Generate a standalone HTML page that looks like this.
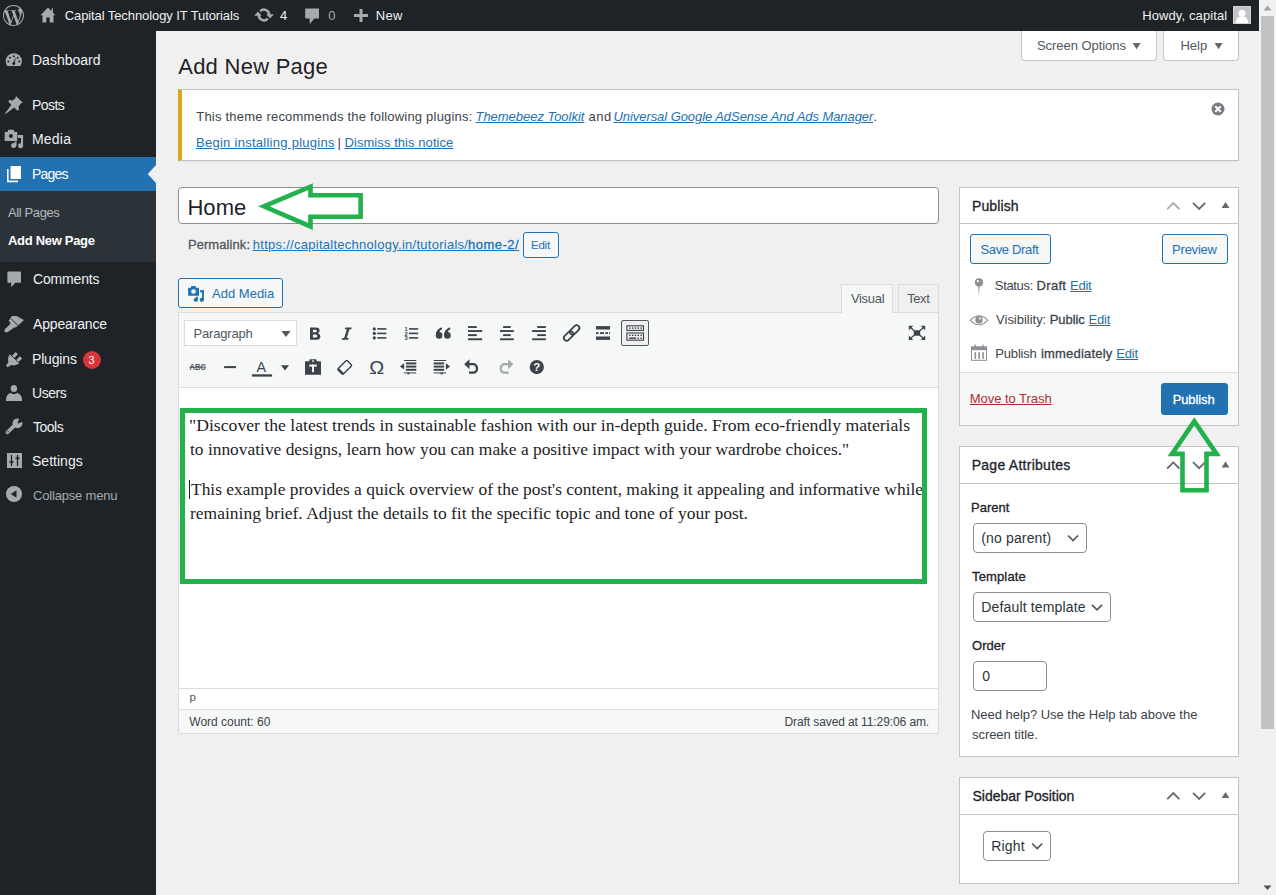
<!DOCTYPE html>
<html><head><meta charset="utf-8"><style>
html,body{margin:0;padding:0;}
body{width:1276px;height:895px;overflow:hidden;position:relative;background:#f0f0f1;font-family:"Liberation Sans",sans-serif;}
.t{position:absolute;white-space:nowrap;text-decoration-thickness:1px;text-underline-offset:1px;}
svg{overflow:visible}
</style></head><body>
<div style="position:absolute;left:0px;top:0px;width:1259px;height:31px;box-sizing:border-box;background:#1d2327"></div>
<div style="position:absolute;left:1259px;top:0px;width:17px;height:895px;box-sizing:border-box;background:#f1f1f1"></div>
<div style="position:absolute;left:1261px;top:16px;width:13px;height:713px;box-sizing:border-box;background:#c1c1c1"></div>
<svg style="position:absolute;left:1263px;top:5px;" width="9" height="6" viewBox="0 0 9 6"><path d="M0.5 5.5 L4.5 0.5 L8.5 5.5Z" fill="#a3a3a3"/></svg>
<svg style="position:absolute;left:1263px;top:885px;" width="9" height="6" viewBox="0 0 9 6"><path d="M0.5 0.5 L4.5 5 L8.5 0.5Z" fill="#505050"/></svg>
<div style="position:absolute;left:0px;top:31px;width:156px;height:864px;box-sizing:border-box;background:#1d2327"></div>
<div style="position:absolute;left:0px;top:157px;width:156px;height:34px;box-sizing:border-box;background:#2271b1"></div>
<div style="position:absolute;left:0px;top:191px;width:156px;height:71px;box-sizing:border-box;background:#2c3338"></div>
<svg style="position:absolute;left:147px;top:165px;" width="9" height="18" viewBox="0 0 9 18"><path d="M9 0 L0.8 9 L9 18Z" fill="#f0f0f1"/></svg>
<div style="position:absolute;left:82.5px;top:351px;width:18.0px;height:18px;box-sizing:border-box;background:#d63638;border-radius:9px"></div>
<div class="t" style="left:82.5px;top:351px;width:18px;text-align:center;font-family:'Liberation Sans';font-size:11px;line-height:18px;color:#fff">3</div>
<div style="position:absolute;left:1021px;top:31px;width:136px;height:30px;box-sizing:border-box;background:#fff;border:1px solid #c3c4c7;border-top:none;border-radius:0 0 4px 4px"></div>
<div style="position:absolute;left:1163px;top:31px;width:76px;height:30px;box-sizing:border-box;background:#fff;border:1px solid #c3c4c7;border-top:none;border-radius:0 0 4px 4px"></div>
<svg style="position:absolute;left:1132px;top:42px;" width="9" height="8" viewBox="0 0 9 8"><path d="M0.6 0.9 L8.6 0.9 L4.6 7.2Z" fill="#646970"/></svg>
<svg style="position:absolute;left:1213.6px;top:42px;" width="9" height="8" viewBox="0 0 9 8"><path d="M0.6 0.9 L8.6 0.9 L4.6 7.2Z" fill="#646970"/></svg>
<div style="position:absolute;left:178px;top:89px;width:1061px;height:72px;box-sizing:border-box;background:#fff;border:1px solid #c3c4c7;border-left:4px solid #dba617;box-shadow:0 1px 1px rgba(0,0,0,.04)"></div>
<svg style="position:absolute;left:1211px;top:102px;" width="14" height="14" viewBox="0 0 14 14"><circle cx="7" cy="7" r="6.5" fill="#787c82"/><path d="M4.3 4.3 L9.7 9.7 M9.7 4.3 L4.3 9.7" stroke="#fff" stroke-width="2"/></svg>
<div style="position:absolute;left:178px;top:187px;width:761px;height:37px;box-sizing:border-box;background:#fff;border:1px solid #8c8f94;border-radius:4px"></div>
<div style="position:absolute;left:523px;top:232px;width:36px;height:26px;box-sizing:border-box;background:#f6f7f7;border:1px solid #2271b1;border-radius:3px"></div>
<div style="position:absolute;left:178px;top:278px;width:105px;height:30px;box-sizing:border-box;background:#f6f7f7;border:1px solid #2271b1;border-radius:3px"></div>
<div style="position:absolute;left:898px;top:284px;width:41px;height:29px;box-sizing:border-box;background:#f0f0f1;border:1px solid #dcdcde"></div>
<div style="position:absolute;left:841px;top:284px;width:52px;height:29px;box-sizing:border-box;background:#f6f7f7;border:1px solid #dcdcde;border-bottom:none"></div>
<div style="position:absolute;left:178px;top:312px;width:761px;height:422px;box-sizing:border-box;background:#fff;border:1px solid #dcdcde"></div>
<div style="position:absolute;left:179px;top:313px;width:759px;height:75px;box-sizing:border-box;background:#f6f7f7;border-bottom:1px solid #dcdcde"></div>
<div style="position:absolute;left:842px;top:312px;width:50px;height:2px;box-sizing:border-box;background:#f6f7f7"></div>
<div style="position:absolute;left:179px;top:688px;width:759px;height:22px;box-sizing:border-box;background:#fff;border-top:1px solid #dcdcde"></div>
<div style="position:absolute;left:179px;top:709px;width:759px;height:24px;box-sizing:border-box;background:#f6f7f7;border-top:1px solid #dcdcde"></div>
<div style="position:absolute;left:184px;top:320px;width:113px;height:26px;box-sizing:border-box;background:#fff;border:1px solid #dcdcde"></div>
<svg style="position:absolute;left:281px;top:330px;" width="10" height="8" viewBox="0 0 10 8"><path d="M0.5 1 L9.5 1 L5 7Z" fill="#50575e"/></svg>
<div style="position:absolute;left:621px;top:320px;width:28px;height:26px;box-sizing:border-box;background:#f0f0f1;border:1px solid #50575e;border-radius:2px"></div>
<div style="position:absolute;left:959px;top:187px;width:280px;height:239px;box-sizing:border-box;background:#fff;border:1px solid #c3c4c7"></div>
<div style="position:absolute;left:960px;top:223px;width:278px;height:1px;box-sizing:border-box;background:#c3c4c7"></div>
<div style="position:absolute;left:970px;top:234px;width:81px;height:30px;box-sizing:border-box;background:#f6f7f7;border:1px solid #2271b1;border-radius:3px"></div>
<div style="position:absolute;left:1162px;top:234px;width:66px;height:30px;box-sizing:border-box;background:#f6f7f7;border:1px solid #2271b1;border-radius:3px"></div>
<div style="position:absolute;left:960px;top:372px;width:278px;height:53px;box-sizing:border-box;background:#f6f7f7;border-top:1px solid #dcdcde"></div>
<div style="position:absolute;left:1161px;top:383px;width:67px;height:32px;box-sizing:border-box;background:#2271b1;border:1px solid #2271b1;border-radius:3px"></div>
<div style="position:absolute;left:959px;top:446px;width:280px;height:311px;box-sizing:border-box;background:#fff;border:1px solid #c3c4c7"></div>
<div style="position:absolute;left:960px;top:483px;width:278px;height:1px;box-sizing:border-box;background:#c3c4c7"></div>
<div style="position:absolute;left:973px;top:523px;width:114px;height:30px;box-sizing:border-box;background:#fff;border:1px solid #8c8f94;border-radius:4px"></div>
<div style="position:absolute;left:973px;top:592px;width:138px;height:30px;box-sizing:border-box;background:#fff;border:1px solid #8c8f94;border-radius:4px"></div>
<div style="position:absolute;left:973px;top:661px;width:74px;height:30px;box-sizing:border-box;background:#fff;border:1px solid #8c8f94;border-radius:4px"></div>
<div style="position:absolute;left:959px;top:777px;width:280px;height:107px;box-sizing:border-box;background:#fff;border:1px solid #c3c4c7"></div>
<div style="position:absolute;left:960px;top:814px;width:278px;height:1px;box-sizing:border-box;background:#c3c4c7"></div>
<div style="position:absolute;left:983px;top:831px;width:68px;height:30px;box-sizing:border-box;background:#fff;border:1px solid #8c8f94;border-radius:4px"></div>
<svg style="position:absolute;left:2.5px;top:4.5px;" width="21" height="21" viewBox="0 0 24 24"><path fill="#a7aaad" d="M21.469 6.825c.84 1.537 1.318 3.3 1.318 5.175 0 3.979-2.156 7.456-5.363 9.325l3.295-9.527c.615-1.54.82-2.771.82-3.864 0-.405-.026-.78-.07-1.11m-7.981.105c.647-.03 1.232-.105 1.232-.105.582-.075.514-.93-.067-.899 0 0-1.755.135-2.88.135-1.064 0-2.85-.15-2.850-.15-.585-.03-.661.855-.075.885 0 0 .54.061 1.125.09l1.68 4.605-2.37 7.08L5.354 6.9c.649-.03 1.234-.1 1.234-.1.585-.075.516-.93-.065-.896 0 0-1.746.138-2.874.138-.2 0-.438-.008-.69-.015C4.911 3.15 8.235 1.215 12 1.215c2.809 0 5.365 1.072 7.286 2.833-.046-.003-.091-.009-.141-.009-1.06 0-1.812.923-1.812 1.914 0 .89.513 1.643 1.06 2.531.411.72.89 1.643.89 2.977 0 .915-.354 1.994-.821 3.479l-1.075 3.585-3.9-11.61.001.014zM12 22.784c-1.059 0-2.081-.153-3.048-.437l3.237-9.406 3.315 9.087c.024.053.05.101.078.149-1.12.393-2.325.609-3.582.609M1.211 12c0-1.564.336-3.05.935-4.39L7.29 21.709C3.694 19.960 1.212 16.271 1.211 12M12 0C5.385 0 0 5.385 0 12s5.385 12 12 12 12-5.385 12-12S18.615 0 12 0"/></svg>
<svg style="position:absolute;left:40px;top:7px;" width="16" height="16" viewBox="0 0 16 16"><path d="M8 0.5 L0.5 8.3 L2.5 8.3 L2.5 15.5 L6.3 15.5 L6.3 10.5 L9.7 10.5 L9.7 15.5 L13.5 15.5 L13.5 8.3 L15.5 8.3 L13 5.7 L13 1.5 L11.5 1.5 L11.5 4.2Z" fill="#a7aaad"/></svg>
<svg style="position:absolute;left:0px;top:0px;" width="1" height="1" viewBox="0 0 1 1"><g fill="none" stroke="#a7aaad" stroke-width="2.5"><path d="M260.2 11.3 A5.2 5.2 0 0 1 269.2 15.2"/><path d="M267.8 18.7 A5.2 5.2 0 0 1 258.8 14.8"/></g><path fill="#a7aaad" d="M266.2 14.2 L273.9 14.2 L270 18.6Z M261.8 15.8 L254.1 15.8 L258 11.4Z"/></svg>
<svg style="position:absolute;left:305px;top:8px;" width="14" height="16" viewBox="0 0 14 16"><path d="M0.6 0.4 H13.6 Q14 0.4 14 0.8 V10.1 Q14 10.5 13.6 10.5 H9.3 L4.8 16 L4.6 10.5 H0.6 Q0.2 10.5 0.2 10.1 V0.8 Q0.2 0.4 0.6 0.4Z" fill="#a7aaad"/></svg>
<svg style="position:absolute;left:354px;top:9px;" width="14" height="13" viewBox="0 0 14 13"><path d="M5.5 0 H8.5 V5 H14 V8 H8.5 V13 H5.5 V8 H0 V5 H5.5Z" fill="#a7aaad"/></svg>
<div style="position:absolute;left:1233px;top:6px;width:18px;height:18px;box-sizing:border-box;background:#c3c4c7;border:1px solid #d0d1d3"></div>
<svg style="position:absolute;left:1233px;top:6px;" width="18" height="18" viewBox="0 0 18 18"><circle cx="9" cy="7.2" r="3.5" fill="#fff"/><path d="M2.8 17 Q3.6 10.8 7.2 10.6 L10.8 10.6 Q14.4 10.8 15.2 17Z" fill="#fff"/></svg>
<svg style="position:absolute;left:0px;top:0px;" width="1" height="1" viewBox="0 0 1 1"><path fill="#a7aaad" d="M7.2 66 A8.1 8.1 0 1 1 20.4 66 Z"/><g fill="#1d2327"><circle cx="13.8" cy="56.2" r="1"/><circle cx="10" cy="57.8" r="1"/><circle cx="17.6" cy="57.8" r="1"/><circle cx="8.4" cy="61.6" r="1"/><circle cx="19.2" cy="61.6" r="1"/><path d="M12.9 63.2 L15.8 57.3 L14.7 63.6Z"/><circle cx="13.8" cy="63.6" r="1.5"/></g></svg>
<svg style="position:absolute;left:0px;top:0px;" width="1" height="1" viewBox="0 0 1 1"><path fill="#a7aaad" d="M16 96 L22.8 102.8 L20.8 103.6 L18.6 106.4 L19 109.6 L17.4 110.8 L14.2 107.6 L5.6 114 L5 113.4 L11.4 104.8 L8.2 101.6 L9.4 100 L12.6 100.4 L15.4 98.2Z"/></svg>
<svg style="position:absolute;left:0px;top:0px;" width="1" height="1" viewBox="0 0 1 1"><path fill="#a7aaad" d="M4.7 132 H7.5 L8.2 129.8 H13.7 L14.4 132 H17.2 V140.9 H4.7Z"/><circle cx="10.9" cy="135.9" r="2" fill="#1d2327"/><path fill="#a7aaad" d="M17.8 134.9 H23.1 V145.6 A2.5 2.5 0 1 1 21 143.2 V138 H17.8Z"/><circle cx="13.6" cy="145.6" r="2.5" fill="#a7aaad"/><rect x="14.6" y="141.6" width="2" height="4" fill="#a7aaad"/></svg>
<svg style="position:absolute;left:6px;top:165px;" width="16" height="18" viewBox="0 0 16 18"><path d="M1 4 H2.6 V15.6 H12 V17.2 H1Z" fill="#fff"/><path d="M4.5 1 H15 V14 H4.5Z" fill="#fff"/></svg>
<svg style="position:absolute;left:6.5px;top:270.5px;" width="15" height="17" viewBox="0 0 15 17"><path d="M1 0.5 L13.4 0.5 Q14 0.5 14 1.1 L14 11.2 Q14 11.8 13.4 11.8 L8.2 11.8 L4.2 16.2 L4.2 11.8 L1 11.8 Q0.4 11.8 0.4 11.2 L0.4 1.1 Q0.4 0.5 1 0.5Z" fill="#a7aaad"/></svg>
<svg style="position:absolute;left:0px;top:0px;" width="1" height="1" viewBox="0 0 1 1"><path fill="#a7aaad" d="M12 316 L16.4 316.1 L23.9 319.9 L18.4 325.2 L16.2 327.1 L13.8 327.8 L7.9 332 Q4.8 333.4 4.4 330.7 Q4.4 329.4 5.6 328.4 L10 324.2 L10.4 322.6 L8.6 320.7 Z"/><path stroke="#1d2327" stroke-width="0.9" d="M10.9 318.8 L18 325.4"/></svg>
<svg style="position:absolute;left:0px;top:0px;" width="1" height="1" viewBox="0 0 1 1"><path fill="#a7aaad" d="M9.7 354.2 L19.3 363.6 Q15.4 366.2 11.2 365 L7.6 367.2 L6 365.6 L8.4 362.2 Q7.2 358 9.7 354.2Z"/><path stroke="#a7aaad" stroke-width="3.1" d="M13.2 356.8 L16.8 353.2 M17.4 361 L21 357.4"/></svg>
<svg style="position:absolute;left:0px;top:0px;" width="1" height="1" viewBox="0 0 1 1"><ellipse cx="13.9" cy="388.5" rx="3.2" ry="3.6" fill="#a7aaad"/><path fill="#a7aaad" d="M6 401 Q5.8 394 10.6 393 Q13.9 395.3 17.2 393 Q22.2 394 22.1 401Z"/></svg>
<svg style="position:absolute;left:0px;top:0px;" width="1" height="1" viewBox="0 0 1 1"><path stroke="#a7aaad" stroke-width="3.6" stroke-linecap="round" d="M7.4 432.4 L15.6 424.4"/><circle cx="17.5" cy="423.3" r="4.9" fill="#a7aaad"/><path fill="#1d2327" d="M17.6 422.6 L19.6 417.4 L23.6 417.4 L23.6 421.2 L18.4 423.4Z"/><circle cx="8" cy="431.8" r="0.8" fill="#1d2327"/></svg>
<svg style="position:absolute;left:7px;top:453px;" width="15" height="15" viewBox="0 0 15 15"><rect x="0" y="0" width="15" height="15" fill="#a7aaad"/><path d="M4.5 2 V13 M10.5 2 V13" stroke="#1d2327" stroke-width="1.3"/><rect x="2.5" y="8.2" width="4" height="1.6" fill="#1d2327"/><rect x="8.5" y="4.5" width="4" height="1.6" fill="#1d2327"/></svg>
<svg style="position:absolute;left:6px;top:486px;" width="16" height="16" viewBox="0 0 16 16"><circle cx="8" cy="8" r="8" fill="#a7aaad"/><path d="M4.8 8 L10.5 4.3 L10.5 11.7Z" fill="#1d2327"/></svg><svg style="position:absolute;left:0;top:0" width="1276" height="895" viewBox="0 0 1276 895"><path fill-rule="evenodd" fill="#3c434a" d="M310 327.4 H315.6 Q319.7 327.4 319.7 330.6 Q319.7 332.5 317.9 333.2 Q320.4 333.9 320.4 336.4 Q320.4 339.8 315.9 339.8 H310 Z M312.9 329.7 V332.2 H315.1 Q316.8 332.2 316.8 330.95 Q316.8 329.7 315.1 329.7 Z M312.9 334.4 V337.5 H315.4 Q317.4 337.5 317.4 335.95 Q317.4 334.4 315.4 334.4 Z"/><path fill="#3c434a" d="M345.3 327.4 H351.8 L351.3 329.3 H349.5 L346.7 337.9 H348.6 L348.1 339.8 H341.7 L342.2 337.9 H344.1 L346.9 329.3 H344.8 Z"/><circle cx="374.3" cy="328.9" r="1.6" fill="#3c434a"/><rect x="377.2" y="328.09999999999997" width="9.2" height="1.6" fill="#3c434a"/><circle cx="374.3" cy="333.4" r="1.6" fill="#3c434a"/><rect x="377.2" y="332.59999999999997" width="9.2" height="1.6" fill="#3c434a"/><circle cx="374.3" cy="337.9" r="1.6" fill="#3c434a"/><rect x="377.2" y="337.09999999999997" width="9.2" height="1.6" fill="#3c434a"/><rect x="409" y="328.09999999999997" width="9.2" height="1.6" fill="#3c434a"/><text x="404.6" y="331.2" font-family="Liberation Sans" font-size="5.8" font-weight="bold" fill="#3c434a">1</text><rect x="409" y="332.59999999999997" width="9.2" height="1.6" fill="#3c434a"/><text x="404.6" y="335.7" font-family="Liberation Sans" font-size="5.8" font-weight="bold" fill="#3c434a">2</text><rect x="409" y="337.09999999999997" width="9.2" height="1.6" fill="#3c434a"/><text x="404.6" y="340.2" font-family="Liberation Sans" font-size="5.8" font-weight="bold" fill="#3c434a">3</text><circle cx="439.1" cy="335.4" r="3.3" fill="#3c434a"/><path fill="#3c434a" d="M435.8 335.6 Q435.6 329.6 441.6 327.3 L442.2 329 Q439.6 330.3 439.3 332.6 Z"/><circle cx="447.40000000000003" cy="335.4" r="3.3" fill="#3c434a"/><path fill="#3c434a" d="M444.1 335.6 Q443.90000000000003 329.6 449.90000000000003 327.3 L450.5 329 Q447.90000000000003 330.3 447.6 332.6 Z"/><rect x="468" y="326.1" width="8.8" height="1.9" fill="#3c434a"/><rect x="468" y="330.1" width="14.2" height="1.9" fill="#3c434a"/><rect x="468" y="334.2" width="8.8" height="1.9" fill="#3c434a"/><rect x="468" y="338.3" width="14.2" height="1.9" fill="#3c434a"/><rect x="503.1" y="326.1" width="7.6" height="1.9" fill="#3c434a"/><rect x="500" y="330.1" width="13.8" height="1.9" fill="#3c434a"/><rect x="503.1" y="334.2" width="7.6" height="1.9" fill="#3c434a"/><rect x="500" y="338.3" width="13.8" height="1.9" fill="#3c434a"/><rect x="537.2" y="326.1" width="8.7" height="1.9" fill="#3c434a"/><rect x="532.1" y="330.1" width="13.8" height="1.9" fill="#3c434a"/><rect x="537.2" y="334.2" width="8.7" height="1.9" fill="#3c434a"/><rect x="532.1" y="338.3" width="13.8" height="1.9" fill="#3c434a"/><g transform="rotate(-45 571.6 333)" fill="none" stroke="#3c434a" stroke-width="1.8"><rect x="561.8" y="330.2" width="11" height="5.6" rx="2.8"/><rect x="570.4" y="330.2" width="11" height="5.6" rx="2.8"/></g><rect x="596" y="326.1" width="14" height="3.4" fill="#3c434a"/><rect x="596" y="336.5" width="14" height="3.4" fill="#3c434a"/><rect x="596" y="332.2" width="2.6" height="1.8" fill="#3c434a"/><rect x="600" y="332.2" width="4" height="1.8" fill="#3c434a"/><rect x="605.4" y="332.2" width="2.6" height="1.8" fill="#3c434a"/><rect x="609" y="332.2" width="1" height="1.8" fill="#3c434a"/><rect x="626.9" y="325.8" width="16.6" height="4.6" fill="none" stroke="#3c434a" stroke-width="1.1"/><rect x="626.9" y="333" width="16.6" height="7.2" fill="none" stroke="#3c434a" stroke-width="1.1"/><rect x="629.2" y="327.4" width="1.4" height="1.4" fill="#3c434a"/><rect x="632.0" y="327.4" width="1.4" height="1.4" fill="#3c434a"/><rect x="634.8000000000001" y="327.4" width="1.4" height="1.4" fill="#3c434a"/><rect x="637.6" y="327.4" width="1.4" height="1.4" fill="#3c434a"/><rect x="640.4000000000001" y="327.4" width="1.4" height="1.4" fill="#3c434a"/><rect x="629.2" y="334.6" width="1.4" height="1.4" fill="#3c434a"/><rect x="632.0" y="334.6" width="1.4" height="1.4" fill="#3c434a"/><rect x="634.8000000000001" y="334.6" width="1.4" height="1.4" fill="#3c434a"/><rect x="637.6" y="334.6" width="1.4" height="1.4" fill="#3c434a"/><rect x="629.2" y="337.5" width="7" height="1.4" fill="#3c434a"/><rect x="637.6" y="337.5" width="1.4" height="1.4" fill="#3c434a"/><rect x="640.4" y="337.5" width="1.4" height="1.4" fill="#3c434a"/><rect x="640.4" y="334.6" width="1.4" height="1.4" fill="#3c434a"/><rect x="913.8" y="330.3" width="6.4" height="5.4" fill="#3c434a"/><path stroke="#3c434a" stroke-width="1.2" d="M910.5 327.5 L914.5 331 M923.5 327.5 L919.5 331 M910.5 338.3 L914.5 335 M923.5 338.3 L919.5 335"/><path fill="#3c434a" d="M908.8 325.8 H913.3 L908.8 330.3Z M925.2 325.8 H920.7 L925.2 330.3Z M908.8 339.9 H913.3 L908.8 335.4Z M925.2 339.9 H920.7 L925.2 335.4Z"/><text x="189.6" y="370.3" font-family="Liberation Sans" font-size="8.2" font-weight="bold" fill="#50575e" textLength="16.2" lengthAdjust="spacingAndGlyphs">ABC</text><rect x="189.5" y="366.6" width="16.6" height="1.1" fill="#50575e"/><rect x="224.1" y="366.1" width="11.9" height="2" fill="#3c434a"/><text x="256.6" y="371.9" font-family="Liberation Sans" font-size="14.3" fill="#3c434a">A</text><rect x="251.9" y="374.3" width="20.2" height="2.3" fill="#3c434a"/><path fill="#3c434a" d="M281 365.2 H289 L285 370.5Z"/><path fill="#3c434a" d="M305 362 Q305 361.2 305.8 361.2 H309.4 V359.9 Q309.4 359.2 310.2 359.2 H315.8 Q316.6 359.2 316.6 359.9 V361.2 H320.2 Q321 361.2 321 362 V374.8 H305Z"/><rect x="312" y="360.4" width="2" height="1.3" fill="#f6f7f7"/><rect x="309.2" y="364.6" width="7.6" height="2" fill="#f6f7f7"/><rect x="312" y="364.6" width="2" height="7.6" fill="#f6f7f7"/><g transform="rotate(45 344.7 367.4)"><rect x="340.9" y="360.8" width="7.6" height="13.2" rx="1.3" fill="none" stroke="#3c434a" stroke-width="1.4"/><rect x="340.9" y="372" width="7.6" height="2" fill="#3c434a"/></g><text x="369.2" y="374.2" font-family="Liberation Sans" font-size="18" fill="#3c434a" textLength="15" lengthAdjust="spacingAndGlyphs">Ω</text><rect x="403.9" y="360" width="12.399999999999977" height="1" fill="#3c434a"/><rect x="403.9" y="372.4" width="12.399999999999977" height="1" fill="#3c434a"/><rect x="405.9" y="362.4" width="10.399999999999977" height="2" fill="#3c434a"/><rect x="405.9" y="365.6" width="10.399999999999977" height="2" fill="#3c434a"/><rect x="405.9" y="368.8" width="10.399999999999977" height="2" fill="#3c434a"/><path fill="#3c434a" d="M399.9 366.4 L404.09999999999997 363.2 L404.09999999999997 369.6Z"/><rect x="407.4" y="372.6" width="2" height="1.8" fill="#3c434a"/><rect x="433.7" y="360" width="12.399999999999977" height="1" fill="#3c434a"/><rect x="433.7" y="372.4" width="12.399999999999977" height="1" fill="#3c434a"/><rect x="433.7" y="362.4" width="10.399999999999977" height="2" fill="#3c434a"/><rect x="433.7" y="365.6" width="10.399999999999977" height="2" fill="#3c434a"/><rect x="433.7" y="368.8" width="10.399999999999977" height="2" fill="#3c434a"/><path fill="#3c434a" d="M450.09999999999997 366.4 L445.9 363.2 L445.9 369.6Z"/><rect x="440.59999999999997" y="372.6" width="2" height="1.8" fill="#3c434a"/><path fill="none" stroke="#3c434a" stroke-width="2.2" d="M467.5 364.2 H474.3 A4.6 4.6 0 0 1 474.3 372.6 H469"/><path fill="#3c434a" d="M464.2 364.2 L469.5 359.2 L469.5 369.2Z"/><path fill="none" stroke="#a7aaad" stroke-width="2.2" d="M510 364.2 H503.4 A4.6 4.6 0 0 0 503.4 372.6 H508.7"/><path fill="#a7aaad" d="M513.4 364.2 L508.1 359.2 L508.1 369.2Z"/><circle cx="536.8" cy="367.1" r="7.1" fill="#3c434a"/><text x="536.8" y="371.4" text-anchor="middle" font-family="Liberation Sans" font-size="11.5" font-weight="bold" fill="#f6f7f7">?</text><path fill="#2271b1" d="M188.1 287.8 H190.8 L191.4 286 H195.5 L196.1 287.8 H199 V295.8 H188.1Z"/><circle cx="193.5" cy="291.5" r="2.3" fill="#f6f7f7"/><rect x="200.1" y="290.2" width="3.8" height="2.3" fill="#2271b1"/><rect x="202" y="290.2" width="1.9" height="9.6" fill="#2271b1"/><circle cx="201.8" cy="299.8" r="2.1" fill="#2271b1"/><circle cx="195.8" cy="299.8" r="2.1" fill="#2271b1"/><rect x="196.2" y="296.6" width="1.7" height="3" fill="#2271b1"/><circle cx="979" cy="282.4" r="4.1" fill="#8c8f94"/><circle cx="977.8" cy="281.2" r="1.1" fill="#fff"/><path fill="#8c8f94" d="M978.2 286 H979.6 L979.1 293.6 H978.6Z"/><path fill="none" stroke="#8c8f94" stroke-width="1.1" d="M970.2 320.3 Q979 311.5 987.8 320.3 Q979 329.1 970.2 320.3Z"/><circle cx="979" cy="319.9" r="3.7" fill="#8c8f94"/><circle cx="979.9" cy="318.5" r="1.1" fill="#fff"/><rect x="971.5" y="347" width="15" height="13.3" fill="none" stroke="#8c8f94" stroke-width="1"/><rect x="971" y="346.6" width="16" height="3.6" fill="#8c8f94"/><rect x="974.4" y="344.6" width="1.3" height="3" fill="#8c8f94"/><rect x="982.3" y="344.6" width="1.3" height="3" fill="#8c8f94"/><rect x="974.5" y="352.2" width="1.6" height="6.6" fill="#8c8f94"/><rect x="978.4" y="352.2" width="1.6" height="6.6" fill="#8c8f94"/><rect x="982.3" y="352.2" width="1.6" height="6.6" fill="#8c8f94"/><path fill="none" stroke="#a7aaad" stroke-width="1.8" d="M1167.2 209.20000000000002 L1173.3 203.10000000000002 L1179.4 209.20000000000002"/><path fill="none" stroke="#646970" stroke-width="1.8" d="M1193 202.8 L1199.1 208.9 L1205.2 202.8"/><path fill="#646970" d="M1221.6 208.10000000000002 L1229.4 208.10000000000002 L1225.5 202.10000000000002Z"/><path fill="none" stroke="#646970" stroke-width="1.8" d="M1167.2 468.5 L1173.3 462.40000000000003 L1179.4 468.5"/><path fill="none" stroke="#646970" stroke-width="1.8" d="M1193 462.1 L1199.1 468.20000000000005 L1205.2 462.1"/><path fill="#646970" d="M1221.6 467.40000000000003 L1229.4 467.40000000000003 L1225.5 461.40000000000003Z"/><path fill="none" stroke="#646970" stroke-width="1.8" d="M1167.2 799.1999999999999 L1173.3 793.0999999999999 L1179.4 799.1999999999999"/><path fill="none" stroke="#646970" stroke-width="1.8" d="M1193 792.8 L1199.1 798.9 L1205.2 792.8"/><path fill="#646970" d="M1221.6 798.0999999999999 L1229.4 798.0999999999999 L1225.5 792.0999999999999Z"/><path fill="none" stroke="#50575e" stroke-width="1.7" d="M1068.1 535.5 L1073.1 540.5 L1078.1 535.5"/><path fill="none" stroke="#50575e" stroke-width="1.7" d="M1092 604.8 L1097 609.8 L1102 604.8"/><path fill="none" stroke="#50575e" stroke-width="1.7" d="M1032.2 843.5 L1037.2 848.5 L1042.2 843.5"/></svg>
<div class="t" style="left:64.70px;top:7px;font-family:'Liberation Sans';font-size:13px;line-height:17px;font-weight:400;color:#f0f0f1;letter-spacing:-0.090px;">Capital Technology IT Tutorials</div>
<div class="t" style="left:280.00px;top:7px;font-family:'Liberation Sans';font-size:13px;line-height:17px;font-weight:400;color:#f0f0f1;letter-spacing:0.000px;">4</div>
<div class="t" style="left:328.30px;top:7px;font-family:'Liberation Sans';font-size:13px;line-height:17px;font-weight:400;color:#a7aaad;letter-spacing:0.000px;">0</div>
<div class="t" style="left:375.70px;top:7px;font-family:'Liberation Sans';font-size:13px;line-height:17px;font-weight:400;color:#f0f0f1;letter-spacing:0.350px;">New</div>
<div class="t" style="left:1142.20px;top:7px;font-family:'Liberation Sans';font-size:13px;line-height:17px;font-weight:400;color:#f0f0f1;letter-spacing:0.108px;">Howdy, capital</div>
<div class="t" style="left:32.00px;top:51px;font-family:'Liberation Sans';font-size:14px;line-height:18px;font-weight:400;color:#f0f0f1;letter-spacing:0.000px;">Dashboard</div>
<div class="t" style="left:32.00px;top:96px;font-family:'Liberation Sans';font-size:14px;line-height:18px;font-weight:400;color:#f0f0f1;letter-spacing:-0.550px;">Posts</div>
<div class="t" style="left:32.00px;top:130px;font-family:'Liberation Sans';font-size:14px;line-height:18px;font-weight:400;color:#f0f0f1;letter-spacing:0.200px;">Media</div>
<div class="t" style="left:32.00px;top:165px;font-family:'Liberation Sans';font-size:14px;line-height:18px;font-weight:400;color:#ffffff;letter-spacing:-0.800px;">Pages</div>
<div class="t" style="left:8.00px;top:204px;font-family:'Liberation Sans';font-size:13px;line-height:17px;font-weight:400;color:#b4b9be;letter-spacing:-0.388px;">All Pages</div>
<div class="t" style="left:8.00px;top:232px;font-family:'Liberation Sans';font-size:13px;line-height:17px;font-weight:700;color:#ffffff;letter-spacing:-0.300px;">Add New Page</div>
<div class="t" style="left:33.00px;top:270px;font-family:'Liberation Sans';font-size:14px;line-height:18px;font-weight:400;color:#f0f0f1;letter-spacing:-0.157px;">Comments</div>
<div class="t" style="left:33.00px;top:315px;font-family:'Liberation Sans';font-size:14px;line-height:18px;font-weight:400;color:#f0f0f1;letter-spacing:-0.167px;">Appearance</div>
<div class="t" style="left:32.00px;top:350px;font-family:'Liberation Sans';font-size:14px;line-height:18px;font-weight:400;color:#f0f0f1;letter-spacing:-0.167px;">Plugins</div>
<div class="t" style="left:32.00px;top:384px;font-family:'Liberation Sans';font-size:14px;line-height:18px;font-weight:400;color:#f0f0f1;letter-spacing:-0.450px;">Users</div>
<div class="t" style="left:33.00px;top:418px;font-family:'Liberation Sans';font-size:14px;line-height:18px;font-weight:400;color:#f0f0f1;letter-spacing:-0.500px;">Tools</div>
<div class="t" style="left:32.00px;top:452px;font-family:'Liberation Sans';font-size:14px;line-height:18px;font-weight:400;color:#f0f0f1;letter-spacing:0.014px;">Settings</div>
<div class="t" style="left:33.00px;top:487px;font-family:'Liberation Sans';font-size:13px;line-height:17px;font-weight:400;color:#a7aaad;letter-spacing:-0.183px;">Collapse menu</div>
<div class="t" style="left:178.20px;top:52px;font-family:'Liberation Sans';font-size:22px;line-height:29px;font-weight:400;color:#1d2327;letter-spacing:0.264px;">Add New Page</div>
<div class="t" style="left:1036.90px;top:37px;font-family:'Liberation Sans';font-size:13px;line-height:17px;font-weight:400;color:#50575e;letter-spacing:-0.038px;">Screen Options</div>
<div class="t" style="left:1180.50px;top:37px;font-family:'Liberation Sans';font-size:13px;line-height:17px;font-weight:400;color:#50575e;letter-spacing:-0.033px;">Help</div>
<div class="t" style="left:196.30px;top:108px;font-family:'Liberation Sans';font-size:13px;line-height:17px;font-weight:400;color:#3c434a;letter-spacing:0.202px;">This theme recommends the following plugins:</div>
<div class="t" style="left:475.50px;top:108px;font-family:'Liberation Sans';font-size:13px;line-height:17px;font-weight:400;color:#2271b1;letter-spacing:-0.031px;font-style:italic;text-decoration:underline;">Themebeez Toolkit</div>
<div class="t" style="left:588.50px;top:108px;font-family:'Liberation Sans';font-size:13px;line-height:17px;font-weight:400;color:#3c434a;letter-spacing:0.500px;">and</div>
<div class="t" style="left:613.50px;top:108px;font-family:'Liberation Sans';font-size:13px;line-height:17px;font-weight:400;color:#2271b1;letter-spacing:-0.064px;font-style:italic;text-decoration:underline;">Universal Google AdSense And Ads Manager</div>
<div class="t" style="left:873.50px;top:108px;font-family:'Liberation Sans';font-size:13px;line-height:17px;font-weight:400;color:#3c434a;letter-spacing:0.000px;">.</div>
<div class="t" style="left:196.00px;top:134px;font-family:'Liberation Sans';font-size:13px;line-height:17px;font-weight:400;color:#2271b1;letter-spacing:0.270px;text-decoration:underline;">Begin installing plugins</div>
<div class="t" style="left:337.50px;top:134px;font-family:'Liberation Sans';font-size:13px;line-height:17px;font-weight:400;color:#3c434a;letter-spacing:0.000px;">|</div>
<div class="t" style="left:344.50px;top:134px;font-family:'Liberation Sans';font-size:13px;line-height:17px;font-weight:400;color:#2271b1;letter-spacing:0.067px;text-decoration:underline;">Dismiss this notice</div>
<div class="t" style="left:187.40px;top:193px;font-family:'Liberation Sans';font-size:22px;line-height:29px;font-weight:400;color:#1d2327;letter-spacing:0.067px;">Home</div>
<div class="t" style="left:187.90px;top:236px;font-family:'Liberation Sans';font-size:13px;line-height:17px;font-weight:400;-webkit-text-stroke:0.3px #50575e;color:#50575e;letter-spacing:0.078px;">Permalink:</div>
<div class="t" style="left:252.80px;top:236px;font-family:'Liberation Sans';font-size:13px;line-height:17px;font-weight:400;color:#2271b1;letter-spacing:0.268px;text-decoration:underline;">https://capitaltechnology.in/tutorials/</div>
<div class="t" style="left:468.00px;top:236px;font-family:'Liberation Sans';font-size:13px;line-height:17px;font-weight:400;-webkit-text-stroke:0.3px #2271b1;color:#2271b1;letter-spacing:0.483px;text-decoration:underline;">home-2/</div>
<div class="t" style="left:531.00px;top:238px;font-family:'Liberation Sans';font-size:11.5px;line-height:15px;font-weight:400;color:#2271b1;letter-spacing:-0.233px;">Edit</div>
<div class="t" style="left:212.00px;top:285px;font-family:'Liberation Sans';font-size:13px;line-height:17px;font-weight:400;color:#2271b1;letter-spacing:0.013px;">Add Media</div>
<div class="t" style="left:850.90px;top:290px;font-family:'Liberation Sans';font-size:13px;line-height:17px;font-weight:400;color:#50575e;letter-spacing:-0.300px;">Visual</div>
<div class="t" style="left:907.30px;top:290px;font-family:'Liberation Sans';font-size:13px;line-height:17px;font-weight:400;color:#50575e;letter-spacing:-0.467px;">Text</div>
<div class="t" style="left:193.40px;top:325px;font-family:'Liberation Sans';font-size:13px;line-height:17px;font-weight:400;color:#50575e;letter-spacing:-0.162px;">Paragraph</div>
<div class="t" style="left:189.20px;top:415px;font-family:'Liberation Serif';font-size:16px;line-height:21px;font-weight:400;color:#1e1e1e;letter-spacing:0.000px;transform:scaleX(1.1035);transform-origin:0 0;">"Discover the latest trends in sustainable fashion with our in-depth guide. From eco-friendly materials</div>
<div class="t" style="left:190.20px;top:439px;font-family:'Liberation Serif';font-size:16px;line-height:21px;font-weight:400;color:#1e1e1e;letter-spacing:0.000px;transform:scaleX(1.0871);transform-origin:0 0;">to innovative designs, learn how you can make a positive impact with your wardrobe choices."</div>
<div class="t" style="left:190.60px;top:479px;font-family:'Liberation Serif';font-size:16px;line-height:21px;font-weight:400;color:#1e1e1e;letter-spacing:0.000px;transform:scaleX(1.0893);transform-origin:0 0;">This example provides a quick overview of the post's content, making it appealing and informative while</div>
<div class="t" style="left:189.50px;top:503px;font-family:'Liberation Serif';font-size:16px;line-height:21px;font-weight:400;color:#1e1e1e;letter-spacing:0.000px;transform:scaleX(1.0939);transform-origin:0 0;">remaining brief. Adjust the details to fit the specific topic and tone of your post.</div>
<div class="t" style="left:189.60px;top:690px;font-family:'Liberation Sans';font-size:11.5px;line-height:15px;font-weight:400;color:#50575e;letter-spacing:0.000px;">p</div>
<div class="t" style="left:189.30px;top:714px;font-family:'Liberation Sans';font-size:12px;line-height:16px;font-weight:400;color:#3c434a;letter-spacing:-0.008px;">Word count: 60</div>
<div class="t" style="left:784.50px;top:714px;font-family:'Liberation Sans';font-size:12px;line-height:16px;font-weight:400;color:#3c434a;letter-spacing:-0.096px;">Draft saved at 11:29:06 am.</div>
<div class="t" style="left:972.00px;top:197px;font-family:'Liberation Sans';font-size:14px;line-height:18px;font-weight:400;-webkit-text-stroke:0.3px #1d2327;color:#1d2327;letter-spacing:0.100px;">Publish</div>
<div class="t" style="left:980.40px;top:241px;font-family:'Liberation Sans';font-size:13px;line-height:17px;font-weight:400;color:#2271b1;letter-spacing:-0.322px;">Save Draft</div>
<div class="t" style="left:1172.10px;top:241px;font-family:'Liberation Sans';font-size:13px;line-height:17px;font-weight:400;color:#2271b1;letter-spacing:-0.233px;">Preview</div>
<div class="t" style="left:994.80px;top:277px;font-family:'Liberation Sans';font-size:13px;line-height:17px;font-weight:400;color:#3c434a;letter-spacing:-0.333px;">Status:</div>
<div class="t" style="left:1036.60px;top:277px;font-family:'Liberation Sans';font-size:13px;line-height:17px;font-weight:400;-webkit-text-stroke:0.3px #3c434a;color:#3c434a;letter-spacing:0.300px;">Draft</div>
<div class="t" style="left:1070.10px;top:277px;font-family:'Liberation Sans';font-size:13px;line-height:17px;font-weight:400;color:#2271b1;letter-spacing:-0.267px;text-decoration:underline;">Edit</div>
<div class="t" style="left:996.10px;top:311px;font-family:'Liberation Sans';font-size:13px;line-height:17px;font-weight:400;color:#3c434a;letter-spacing:-0.020px;">Visibility:</div>
<div class="t" style="left:1049.70px;top:311px;font-family:'Liberation Sans';font-size:13px;line-height:17px;font-weight:400;-webkit-text-stroke:0.3px #3c434a;color:#3c434a;letter-spacing:-0.060px;">Public</div>
<div class="t" style="left:1088.60px;top:311px;font-family:'Liberation Sans';font-size:13px;line-height:17px;font-weight:400;color:#2271b1;letter-spacing:-0.233px;text-decoration:underline;">Edit</div>
<div class="t" style="left:995.30px;top:345px;font-family:'Liberation Sans';font-size:13px;line-height:17px;font-weight:400;color:#3c434a;letter-spacing:-0.183px;">Publish</div>
<div class="t" style="left:1041.00px;top:345px;font-family:'Liberation Sans';font-size:13px;line-height:17px;font-weight:400;-webkit-text-stroke:0.3px #3c434a;color:#3c434a;letter-spacing:0.190px;">immediately</div>
<div class="t" style="left:1116.30px;top:345px;font-family:'Liberation Sans';font-size:13px;line-height:17px;font-weight:400;color:#2271b1;letter-spacing:-0.167px;text-decoration:underline;">Edit</div>
<div class="t" style="left:969.80px;top:390px;font-family:'Liberation Sans';font-size:13px;line-height:17px;font-weight:400;color:#b32d2e;letter-spacing:-0.042px;text-decoration:underline;text-underline-offset:1px;">Move to Trash</div>
<div class="t" style="left:1172.70px;top:391px;font-family:'Liberation Sans';font-size:13px;line-height:17px;font-weight:400;-webkit-text-stroke:0.3px #ffffff;color:#ffffff;letter-spacing:-0.117px;">Publish</div>
<div class="t" style="left:971.70px;top:456px;font-family:'Liberation Sans';font-size:14px;line-height:18px;font-weight:400;-webkit-text-stroke:0.3px #1d2327;color:#1d2327;letter-spacing:0.264px;">Page Attributes</div>
<div class="t" style="left:971.00px;top:499px;font-family:'Liberation Sans';font-size:13px;line-height:17px;font-weight:400;-webkit-text-stroke:0.3px #1d2327;color:#1d2327;letter-spacing:0.000px;">Parent</div>
<div class="t" style="left:981.30px;top:529px;font-family:'Liberation Sans';font-size:14px;line-height:18px;font-weight:400;color:#2c3338;letter-spacing:0.140px;">(no parent)</div>
<div class="t" style="left:972.00px;top:568px;font-family:'Liberation Sans';font-size:13px;line-height:17px;font-weight:400;-webkit-text-stroke:0.3px #1d2327;color:#1d2327;letter-spacing:0.143px;">Template</div>
<div class="t" style="left:981.30px;top:598px;font-family:'Liberation Sans';font-size:14px;line-height:18px;font-weight:400;color:#2c3338;letter-spacing:0.153px;">Default template</div>
<div class="t" style="left:972.00px;top:637px;font-family:'Liberation Sans';font-size:13px;line-height:17px;font-weight:400;-webkit-text-stroke:0.3px #1d2327;color:#1d2327;letter-spacing:0.050px;">Order</div>
<div class="t" style="left:982.30px;top:667px;font-family:'Liberation Sans';font-size:14px;line-height:18px;font-weight:400;color:#2c3338;letter-spacing:0.000px;">0</div>
<div class="t" style="left:971.00px;top:706px;font-family:'Liberation Sans';font-size:13px;line-height:17px;font-weight:400;color:#3c434a;letter-spacing:-0.036px;">Need help? Use the Help tab above the</div>
<div class="t" style="left:972.00px;top:726px;font-family:'Liberation Sans';font-size:13px;line-height:17px;font-weight:400;color:#3c434a;letter-spacing:-0.050px;">screen title.</div>
<div class="t" style="left:972.50px;top:787px;font-family:'Liberation Sans';font-size:14px;line-height:18px;font-weight:400;-webkit-text-stroke:0.3px #1d2327;color:#1d2327;letter-spacing:-0.007px;">Sidebar Position</div>
<div class="t" style="left:991.20px;top:837px;font-family:'Liberation Sans';font-size:14px;line-height:18px;font-weight:400;color:#2c3338;letter-spacing:0.175px;">Right</div>

<div style="position:absolute;left:189px;top:480px;width:1px;height:19px;background:#1e1e1e"></div>
<div style="position:absolute;left:180px;top:408px;width:747px;height:175.5px;box-sizing:border-box;border:5px solid #22b14c"></div>
<svg style="position:absolute;left:0;top:0" width="1276" height="895" viewBox="0 0 1276 895">
<path d="M263.8,206.3 L310.5,186.6 L310.5,195.3 L360.6,195.3 L360.6,216.8 L310.5,216.8 L310.5,226.4 Z" fill="none" stroke="#22b14c" stroke-width="4.6" stroke-linejoin="miter" stroke-miterlimit="10"/>
<path d="M1194.3,421.4 L1216.6,453.9 L1206.5,453.9 L1206.5,490.2 L1182.5,490.2 L1182.5,453.9 L1172,453.9 Z" fill="none" stroke="#22b14c" stroke-width="4.6" stroke-linejoin="miter" stroke-miterlimit="10"/>
</svg>

</body></html>
